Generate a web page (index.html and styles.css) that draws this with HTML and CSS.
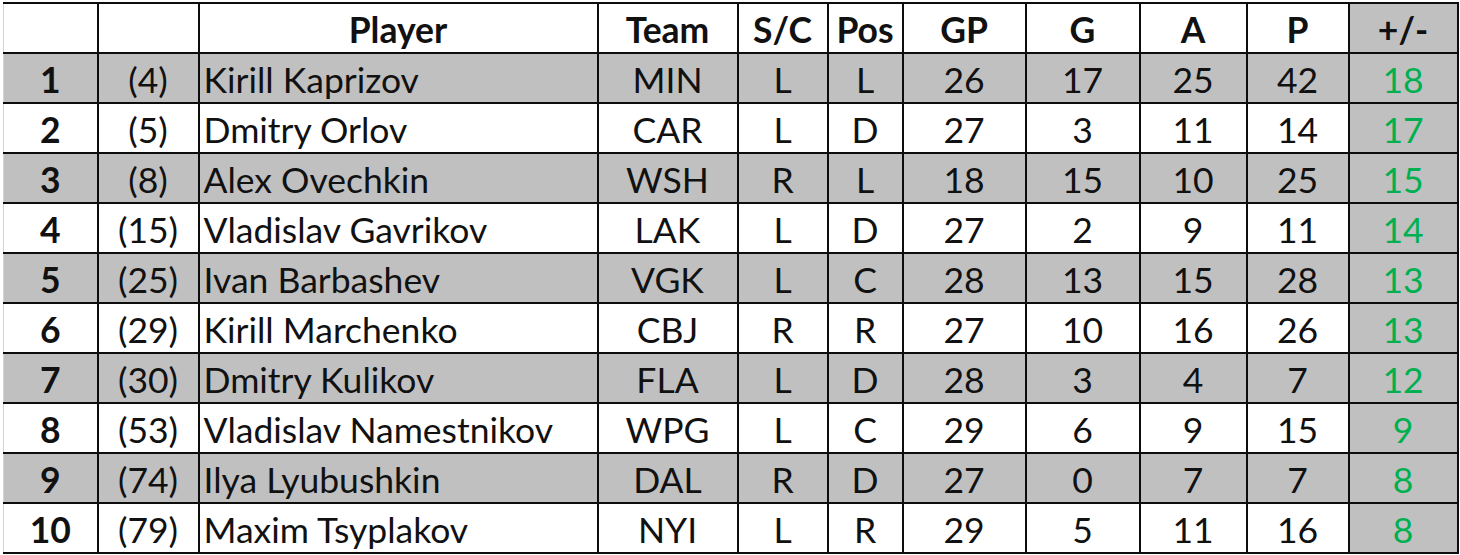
FILE: index.html
```html
<!DOCTYPE html>
<html lang="en">

<head>
    <meta charset="UTF-8">
    <meta name="viewport" content="width=device-width, initial-scale=1.0">
    <title>Russian players +/-</title>
    <link rel="stylesheet" href="styles.css">
</head>

<body>
    <div class="sheet">
        <table class="stats">
            <colgroup>
                <col class="c-rank">
                <col class="c-prev">
                <col class="c-name">
                <col class="c-team">
                <col class="c-sc">
                <col class="c-pos">
                <col class="c-gp">
                <col class="c-g">
                <col class="c-a">
                <col class="c-p">
                <col class="c-pm">
            </colgroup>
            <thead>
                <tr>
                    <th class="first"></th>
                    <th></th>
                    <th>Player</th>
                    <th>Team</th>
                    <th>S/C</th>
                    <th>Pos</th>
                    <th>GP</th>
                    <th>G</th>
                    <th>A</th>
                    <th>P</th>
                    <th class="pm">+/-</th>
                </tr>
            </thead>
            <tbody>
                <tr class="shade">
                    <td class="first rank">1</td><td>(4)</td><td class="name">Kirill Kaprizov</td><td>MIN</td><td>L</td><td>L</td><td>26</td><td>17</td><td>25</td><td>42</td><td class="pm">18</td>
                </tr>
                <tr>
                    <td class="first rank">2</td><td>(5)</td><td class="name">Dmitry Orlov</td><td>CAR</td><td>L</td><td>D</td><td>27</td><td>3</td><td>11</td><td>14</td><td class="pm">17</td>
                </tr>
                <tr class="shade">
                    <td class="first rank">3</td><td>(8)</td><td class="name">Alex Ovechkin</td><td>WSH</td><td>R</td><td>L</td><td>18</td><td>15</td><td>10</td><td>25</td><td class="pm">15</td>
                </tr>
                <tr>
                    <td class="first rank">4</td><td>(15)</td><td class="name">Vladislav Gavrikov</td><td>LAK</td><td>L</td><td>D</td><td>27</td><td>2</td><td>9</td><td>11</td><td class="pm">14</td>
                </tr>
                <tr class="shade">
                    <td class="first rank">5</td><td>(25)</td><td class="name">Ivan Barbashev</td><td>VGK</td><td>L</td><td>C</td><td>28</td><td>13</td><td>15</td><td>28</td><td class="pm">13</td>
                </tr>
                <tr>
                    <td class="first rank">6</td><td>(29)</td><td class="name">Kirill Marchenko</td><td>CBJ</td><td>R</td><td>R</td><td>27</td><td>10</td><td>16</td><td>26</td><td class="pm">13</td>
                </tr>
                <tr class="shade">
                    <td class="first rank">7</td><td>(30)</td><td class="name">Dmitry Kulikov</td><td>FLA</td><td>L</td><td>D</td><td>28</td><td>3</td><td>4</td><td>7</td><td class="pm">12</td>
                </tr>
                <tr>
                    <td class="first rank">8</td><td>(53)</td><td class="name">Vladislav Namestnikov</td><td>WPG</td><td>L</td><td>C</td><td>29</td><td>6</td><td>9</td><td>15</td><td class="pm">9</td>
                </tr>
                <tr class="shade">
                    <td class="first rank">9</td><td>(74)</td><td class="name">Ilya Lyubushkin</td><td>DAL</td><td>R</td><td>D</td><td>27</td><td>0</td><td>7</td><td>7</td><td class="pm">8</td>
                </tr>
                <tr>
                    <td class="first rank">10</td><td>(79)</td><td class="name">Maxim Tsyplakov</td><td>NYI</td><td>L</td><td>R</td><td>29</td><td>5</td><td>11</td><td>16</td><td class="pm">8</td>
                </tr>
            </tbody>
        </table>
    </div>
</body>

</html>
```

FILE: styles.css
```css
* {
    margin: 0;
    padding: 0;
    box-sizing: border-box;
}

body {
    background-color: #fff;
    font-family: Lato, "Open Sans", sans-serif;
    color: #111;
    width: 1460px;
    height: 555px;
    overflow: hidden;
}

.sheet {
    padding: 2px 0 0 3px;
}

.stats {
    border-collapse: collapse;
    table-layout: fixed;
    width: 1454px;
}

.stats col.c-rank { width: 94px; }
.stats col.c-prev { width: 101px; }
.stats col.c-name { width: 399px; }
.stats col.c-team { width: 140px; }
.stats col.c-sc { width: 90px; }
.stats col.c-pos { width: 75px; }
.stats col.c-gp { width: 123px; }
.stats col.c-g { width: 114px; }
.stats col.c-a { width: 107px; }
.stats col.c-p { width: 102px; }
.stats col.c-pm { width: 109px; }

.stats th,
.stats td {
    border: 2px solid #0d0d0d;
    height: 50px;
    font-size: 35.5px;
    line-height: 30px;
    text-align: center;
    vertical-align: bottom;
    padding: 0 4px 7px;
    white-space: nowrap;
}

.stats th {
    font-weight: bold;
    background-color: #fff;
}

.stats .first {
    border-left: 1px solid #d4d4d4;
}

.stats .rank {
    font-weight: bold;
}

.stats .name {
    text-align: left;
    padding-left: 4px;
}

.stats tr.shade td {
    background-color: #c0c0c0;
}

.stats th.pm,
.stats td.pm {
    background-color: #c0c0c0;
}

.stats td.pm {
    color: #00b050;
}
```
